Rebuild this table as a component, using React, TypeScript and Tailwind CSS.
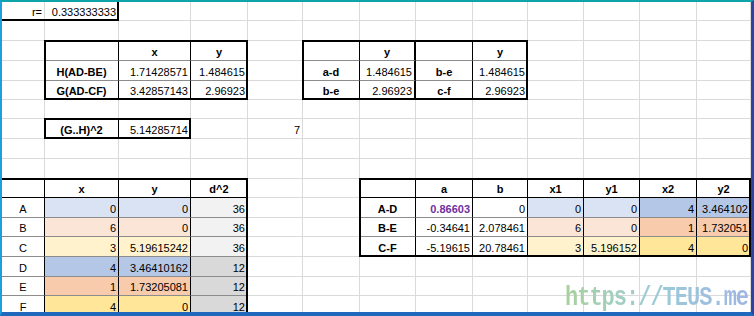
import React from "react";

type C = {
  t?: string;
  a?: "c" | "r";
  b?: boolean;
  bg?: string;
  rw?: string;
  rc?: string;
  bc?: string;
  tc?: string;
};

const K = "border-r-black";
const KB = "border-b-black";
const H = "border-b-[#8c8c8c]";

const L1 = "bg-[#dae3f3]";
const L2 = "bg-[#fbe5d6]";
const L3 = "bg-[#fff2cc]";
const D1 = "bg-[#b4c7e7]";
const D2 = "bg-[#f8cbad]";
const D3 = "bg-[#ffe699]";
const G1 = "bg-[#f2f2f2]";
const G2 = "bg-[#d9d9d9]";

const cells: Record<string, C> = {
  // r=
  "1-1": { t: "r=", a: "r", bc: KB },
  "1-2": { t: "0.333333333", a: "r", rc: K, bc: KB },

  // H / G table
  "3-2": { rc: K, bc: H },
  "3-3": { t: "x", a: "c", b: true, rc: K, bc: H },
  "3-4": { t: "y", a: "c", b: true, rc: K, bc: H },
  "4-2": { t: "H(AD-BE)", a: "c", b: true, rc: K, bc: H },
  "4-3": { t: "1.71428571", a: "r", rc: K, bc: H },
  "4-4": { t: "1.484615", a: "r", rc: K, bc: H },
  "5-2": { t: "G(AD-CF)", a: "c", b: true, rc: K, bc: KB },
  "5-3": { t: "3.42857143", a: "r", rc: K, bc: KB },
  "5-4": { t: "2.96923", a: "r", rc: K, bc: KB },

  // a-d table
  "3-6": { rc: K, bc: H },
  "3-7": { t: "y", a: "c", b: true, rc: K, rw: "border-r-2", bc: H },
  "3-8": { rc: K, bc: H },
  "3-9": { t: "y", a: "c", b: true, rc: K, bc: H },
  "4-6": { t: "a-d", a: "c", b: true, rc: K, bc: H },
  "4-7": { t: "1.484615", a: "r", rc: K, rw: "border-r-2", bc: H },
  "4-8": { t: "b-e", a: "c", b: true, rc: K, bc: H },
  "4-9": { t: "1.484615", a: "r", rc: K, bc: H },
  "5-6": { t: "b-e", a: "c", b: true, rc: K, bc: KB },
  "5-7": { t: "2.96923", a: "r", rc: K, rw: "border-r-2", bc: KB },
  "5-8": { t: "c-f", a: "c", b: true, rc: K, bc: KB },
  "5-9": { t: "2.96923", a: "r", rc: K, bc: KB },

  // (G..H)^2
  "7-2": { t: "(G..H)^2", a: "c", b: true, rc: K, bc: KB },
  "7-3": { t: "5.14285714", a: "r", rc: K, bc: KB },
  "7-5": { t: "7", a: "r" },

  // points table
  "10-1": { rc: K, bc: KB },
  "10-2": { t: "x", a: "c", b: true, rc: K, bc: KB },
  "10-3": { t: "y", a: "c", b: true, rc: K, bc: KB },
  "10-4": { t: "d^2", a: "c", b: true, rc: K, bc: KB },
  "11-1": { t: "A", a: "c", rc: K, bc: H },
  "11-2": { t: "0", a: "r", bg: L1, rc: K, bc: H },
  "11-3": { t: "0", a: "r", bg: L1, rc: K, bc: H },
  "11-4": { t: "36", a: "r", bg: G1, rc: K, bc: H },
  "12-1": { t: "B", a: "c", rc: K, bc: H },
  "12-2": { t: "6", a: "r", bg: L2, rc: K, bc: H },
  "12-3": { t: "0", a: "r", bg: L2, rc: K, bc: H },
  "12-4": { t: "36", a: "r", bg: G1, rc: K, bc: H },
  "13-1": { t: "C", a: "c", rc: K, bc: H },
  "13-2": { t: "3", a: "r", bg: L3, rc: K, bc: H },
  "13-3": { t: "5.19615242", a: "r", bg: L3, rc: K, bc: H },
  "13-4": { t: "36", a: "r", bg: G1, rc: K, bc: H },
  "14-1": { t: "D", a: "c", rc: K, bc: H },
  "14-2": { t: "4", a: "r", bg: D1, rc: K, bc: H },
  "14-3": { t: "3.46410162", a: "r", bg: D1, rc: K, bc: H },
  "14-4": { t: "12", a: "r", bg: G2, rc: K, bc: H },
  "15-1": { t: "E", a: "c", rc: K, bc: H },
  "15-2": { t: "1", a: "r", bg: D2, rc: K, bc: H },
  "15-3": { t: "1.73205081", a: "r", bg: D2, rc: K, bc: H },
  "15-4": { t: "12", a: "r", bg: G2, rc: K, bc: H },
  "16-1": { t: "F", a: "c", rc: K, bc: H },
  "16-2": { t: "4", a: "r", bg: D3, rc: K, bc: H },
  "16-3": { t: "0", a: "r", bg: D3, rc: K, bc: H },
  "16-4": { t: "12", a: "r", bg: G2, rc: K, bc: H },

  // lines table
  "10-7": { rc: K, bc: KB },
  "10-8": { t: "a", a: "c", b: true, rc: K, bc: KB },
  "10-9": { t: "b", a: "c", b: true, rc: K, bc: KB },
  "10-10": { t: "x1", a: "c", b: true, rc: K, bc: KB },
  "10-11": { t: "y1", a: "c", b: true, rc: K, bc: KB },
  "10-12": { t: "x2", a: "c", b: true, rc: K, bc: KB },
  "10-13": { t: "y2", a: "c", b: true, rc: K, bc: KB },
  "11-7": { t: "A-D", a: "c", b: true, rc: K, bc: H },
  "11-8": { t: "0.86603", a: "r", b: true, tc: "text-[#7030a0]", rc: K, bc: H },
  "11-9": { t: "0", a: "r", rc: K, bc: H },
  "11-10": { t: "0", a: "r", bg: L1, rc: K, bc: H },
  "11-11": { t: "0", a: "r", bg: L1, rc: K, bc: H },
  "11-12": { t: "4", a: "r", bg: D1, rc: K, bc: H },
  "11-13": { t: "3.464102", a: "r", bg: D1, rc: K, bc: H },
  "12-7": { t: "B-E", a: "c", b: true, rc: K, bc: H },
  "12-8": { t: "-0.34641", a: "r", rc: K, bc: H },
  "12-9": { t: "2.078461", a: "r", rc: K, bc: H },
  "12-10": { t: "6", a: "r", bg: L2, rc: K, bc: H },
  "12-11": { t: "0", a: "r", bg: L2, rc: K, bc: H },
  "12-12": { t: "1", a: "r", bg: D2, rc: K, bc: H },
  "12-13": { t: "1.732051", a: "r", bg: D2, rc: K, bc: H },
  "13-7": { t: "C-F", a: "c", b: true, rc: K, bc: KB },
  "13-8": { t: "-5.19615", a: "r", rc: K, bc: KB },
  "13-9": { t: "20.78461", a: "r", rc: K, bc: KB },
  "13-10": { t: "3", a: "r", bg: L3, rc: K, bc: KB },
  "13-11": { t: "5.196152", a: "r", bg: L3, rc: K, bc: KB },
  "13-12": { t: "4", a: "r", bg: D3, rc: K, bc: KB },
  "13-13": { t: "0", a: "r", bg: D3, rc: K, bc: KB },
};

const rows = Array.from({ length: 16 }, (_, i) => i + 1);
const cols = Array.from({ length: 13 }, (_, i) => i + 1);

const GRID =
  "grid grid-cols-[43px_74px_72px_57px_55px_57px_56px_57px_55px_56px_56px_57px_1fr] grid-rows-[19px_20px_20px_20px_19px_19px_20px_20px_20px_19px_20px_19px_20px_20px_19px_20px]";

const SheetCell: React.FC<{ c: C }> = ({ c }) => {
  const justify = c.a === "c" ? "justify-center" : c.a === "r" ? "justify-end" : "justify-start";
  return (
    <div
      className={`flex items-end overflow-hidden whitespace-nowrap px-[2px] pb-[2px] leading-none border-b ${
        c.rw ?? "border-r"
      } ${c.rc ?? "border-r-[#dadada]"} ${c.bc ?? "border-b-[#dadada]"} ${c.bg ?? "bg-white"} ${justify} ${
        c.b ? "font-bold" : ""
      } ${c.tc ?? "text-black"}`}
    >
      {c.t}
    </div>
  );
};

export default function App() {
  return (
    <div className="relative w-[754px] h-[316px] overflow-hidden bg-white border-t-2 border-t-[#0ea5a8] border-l-2 border-l-[#1c9fdc] border-r-[3px] border-r-[#2b46a0] border-b-4 border-b-[#1f68bd] font-['Liberation_Sans',Arial,sans-serif] text-[11px]">
      <div className="grid h-full">
        {/* cells */}
        <div className={`${GRID} col-start-1 row-start-1`}>
          {rows.map((r) =>
            cols.map((c) => <SheetCell key={`${r}-${c}`} c={cells[`${r}-${c}`] ?? {}} />)
          )}
        </div>

        {/* thick borders */}
        <div className={`${GRID} col-start-1 row-start-1 relative z-10 pointer-events-none`}>
          <div className="col-start-1 col-span-2 row-start-1 border-b-2 border-r-2 border-black" />
          <div className="col-start-2 col-span-3 row-start-3 row-span-3 -mt-px -ml-px border-2 border-black" />
          <div className="col-start-6 col-span-4 row-start-3 row-span-3 -mt-px -ml-px border-2 border-black" />
          <div className="col-start-2 col-span-2 row-start-7 -mt-px -ml-px border-2 border-black" />
          <div className="col-start-1 col-span-4 row-start-10 row-span-7 -mt-px border-t-2 border-r-2 border-black" />
          <div className="col-start-7 col-span-7 row-start-10 row-span-4 -mt-px -ml-px border-2 border-black" />
        </div>
      </div>

      {/* watermark */}
      <div className="absolute left-[563px] top-[283px] z-20 origin-top scale-y-125 leading-none whitespace-nowrap font-['Liberation_Mono',monospace] font-bold text-[22px] tracking-[-1px] bg-gradient-to-r from-[#a9d19c] via-[#9ccbd8] to-[#9fb6e3] bg-clip-text text-transparent">
        https://TEUS.me
      </div>
    </div>
  );
}
